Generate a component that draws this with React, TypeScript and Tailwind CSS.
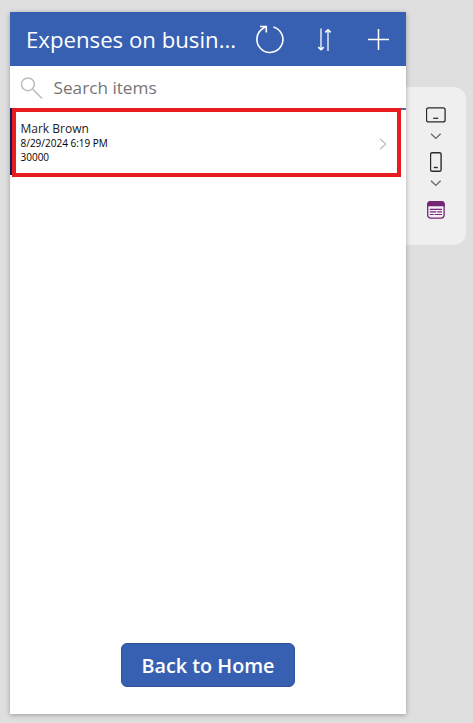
import React from 'react';

function ReloadIcon() {
  return (
    <svg className="block" width="30" height="30" viewBox="0 0 30 30" fill="none" stroke="#fff" strokeWidth="1.6">
      <path d="M18.4 2.9A13 13 0 1 1 8.2 4.3L11.2 2.4" />
      <path d="M5 2.5H11.3V8.6" />
    </svg>
  );
}

function SortIcon() {
  return (
    <svg className="block" width="14" height="24" viewBox="0 0 14 24" fill="none" stroke="#fff">
      <path d="M4 .5V21.5M11 23V2" strokeOpacity=".8" strokeWidth="1.6" />
      <path d="M1.3 19.2L4 21.7L6.7 19.2M8.3 4.3L11 1.8L13.7 4.3" strokeWidth="1.7" />
    </svg>
  );
}

function PlusIcon() {
  return (
    <svg className="block" width="21" height="21" viewBox="0 0 21 21" fill="none" stroke="#fff" strokeWidth="1.5">
      <path d="M10.5 0V21M0 10.5H21" />
    </svg>
  );
}

function SearchIcon() {
  return (
    <svg className="mt-[2px] shrink-0" width="22" height="22" viewBox="0 0 22 22" fill="none" stroke="#bdbdbd" strokeWidth="1.5">
      <circle cx="6.9" cy="7.3" r="6.4" />
      <path d="M11.6 12L21 21.5" />
    </svg>
  );
}

function Chevron() {
  return (
    <svg className="block" width="12" height="7" viewBox="0 0 12 7" fill="none" stroke="#666" strokeWidth="1.3">
      <path d="M1 .8L5.8 5.4L10.6 .8" />
    </svg>
  );
}

function DeviceRail() {
  return (
    <aside className="mt-[87px] flex h-[158px] w-[60px] flex-col items-center rounded-r-xl bg-[#efefef] pt-5">
      <svg className="block" width="20" height="16" viewBox="0 0 20 16" fill="none" stroke="#2b2b2b" strokeWidth="1.3">
        <rect x=".5" y=".9" width="18.6" height="14" rx="2" />
        <path d="M7.2 11.3H12.2" />
      </svg>
      <div className="mt-[10px]"><Chevron /></div>
      <svg className="mt-3 block" width="12" height="20" viewBox="0 0 12 20" fill="none" stroke="#2b2b2b" strokeWidth="1.4">
        <rect x=".5" y=".7" width="10.6" height="18.6" rx="1.6" />
        <path d="M3.8 15.5H7.8" />
      </svg>
      <div className="mt-2"><Chevron /></div>
      <svg className="mt-[14px] block" width="18" height="18" viewBox="0 0 18 18" fill="none" stroke="#742774" strokeWidth="1.3">
        <rect x=".7" y=".7" width="16.4" height="16.4" rx="3" fill="#f6eff6" />
        <path d="M.7 4.5V3.5A2.8 2.8 0 0 1 3.5 .7H14.3A2.8 2.8 0 0 1 17.1 3.5V4.5Z" fill="#742774" />
        <path d="M2.8 8.3H15M2.8 10.9H9.3M10.3 10.9H15M2.8 13.5H6.8M7.8 13.5H15" strokeWidth="1.2" />
      </svg>
    </aside>
  );
}

export default function App() {
  return (
    <div className="flex h-[723px] w-[473px] overflow-hidden bg-[#dfdfdf] pl-[10px] font-['Open_Sans',sans-serif]">
      <main className="z-10 mt-3 flex h-[702px] w-[396px] shrink-0 flex-col bg-white shadow-[0_1px_5px_rgba(0,0,0,0.3)]">
        <header className="flex h-[54px] shrink-0 items-center bg-[#3860b2] text-white">
          <h1 className="w-[229px] shrink-0 whitespace-nowrap pl-4 pt-[2px] text-[22.2px] leading-[52px]">Expenses on busin...</h1>
          <div className="ml-4"><ReloadIcon /></div>
          <div className="ml-[32px] pt-[1px]"><SortIcon /></div>
          <div className="ml-[37px]"><PlusIcon /></div>
        </header>
        <div className="flex h-[42px] shrink-0 items-center gap-[10.5px] pl-[11px]">
          <SearchIcon />
          <span className="pt-[2px] text-[17.2px] leading-[40px] text-[#757575]">Search items</span>
        </div>
        <section className="relative flex h-[67px] shrink-0 items-center justify-between border-l-2 border-[#0d1a5c] pl-[8.5px] pr-[19px]">
          <div className="pt-[2px] text-black">
            <p className="text-[12px] leading-[15px] text-[#212121]">Mark Brown</p>
            <p className="text-[10px] leading-[14px]">8/29/2024 6:19 PM</p>
            <p className="text-[10px] leading-[14px]">30000</p>
          </div>
          <svg className="mt-1" width="8" height="12" viewBox="0 0 8 12" fill="none" stroke="#bdbdbd" strokeWidth="1.2">
            <path d="M1 .7L6.7 6L1 11.3" />
          </svg>
          <div className="absolute right-0 top-0 h-[2px] w-[5px] bg-[#5965a5]" />
          <div className="absolute left-0 top-0 h-[69px] w-[389px] border-4 border-[#e81c1f]" />
        </section>
        <div className="mt-auto flex justify-center pb-[27px]">
          <button className="h-[44px] w-[174px] rounded-md border border-[#2f519a] bg-[#3860b2] pt-[1px] text-[19.8px] font-semibold leading-[41px] text-white">Back to Home</button>
        </div>
      </main>
      <DeviceRail />
    </div>
  );
}
